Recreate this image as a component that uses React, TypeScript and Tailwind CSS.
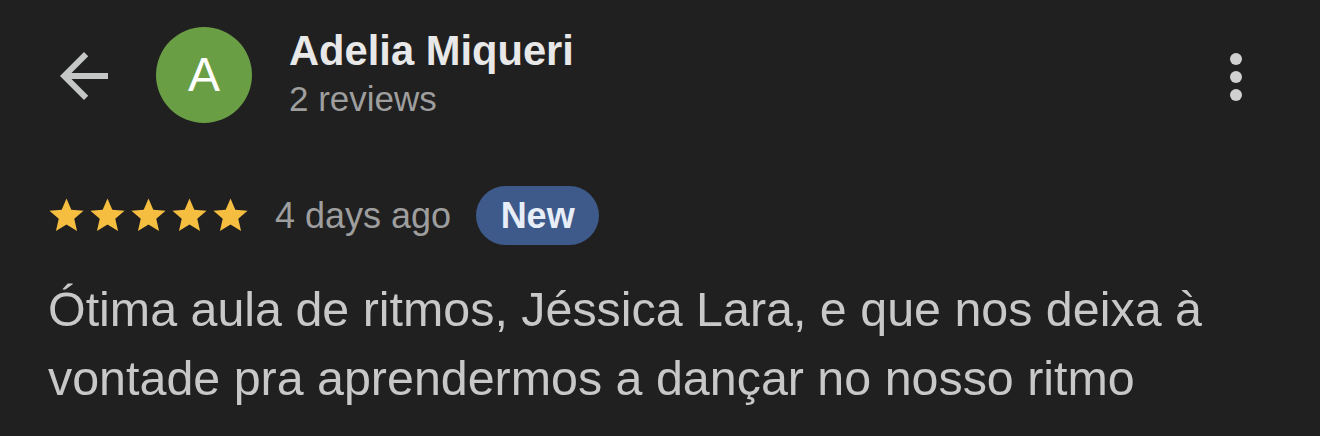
import React from "react";

const Star = () => (
  <svg width="41" height="41" viewBox="0 0 24 24" className="block">
    <path
      fill="#f5be41"
      d="M12 17.27L18.18 21l-1.64-7.03L22 9.24l-7.19-.61L12 2 9.19 8.63 2 9.24l5.46 4.73L5.82 21z"
    />
  </svg>
);

export default function App() {
  return (
    <div className="w-[1320px] h-[436px] bg-[#202020] overflow-hidden font-['Liberation_Sans',Arial,sans-serif]">
      <div className="flex items-start pt-[27px] pl-[48px] pr-[48px]">
        <svg width="72" height="72" viewBox="0 0 24 24" className="mt-[13px] shrink-0">
          <path
            fill="#c4c7c5"
            d="M20 11H7.83l5.59-5.59L12 4l-8 8 8 8 1.41-1.41L7.83 13H20v-2z"
          />
        </svg>
        <div className="ml-[36px] w-[96px] h-[96px] rounded-full bg-[#6a9e44] flex items-center justify-center shrink-0">
          <span className="text-[48px] leading-none text-white">A</span>
        </div>
        <div className="ml-[37px] flex flex-col">
          <div className="text-[41.7px] leading-[48px] font-bold text-[#e8e8e8]">Adelia Miqueri</div>
          <div className="mt-[4px] text-[35px] leading-[40px] text-[#9e9e9e]">2 reviews</div>
        </div>
        <svg width="72" height="72" viewBox="0 0 24 24" className="ml-auto mt-[14px] shrink-0">
          <circle cx="12" cy="6" r="2" fill="#d0d0d0" />
          <circle cx="12" cy="12" r="2" fill="#d0d0d0" />
          <circle cx="12" cy="18" r="2" fill="#d0d0d0" />
        </svg>
      </div>

      <div className="mt-[63px] pl-[46px] flex items-center">
        <div className="flex">
          <Star />
          <Star />
          <Star />
          <Star />
          <Star />
        </div>
        <span className="ml-[24px] text-[36px] leading-[40px] text-[#9e9e9e]">4 days ago</span>
        <div className="ml-[25px] w-[123px] h-[59px] rounded-full bg-[#3d5a8a] flex items-center justify-center">
          <span className="text-[36px] leading-none font-bold text-[#e8eef8]">New</span>
        </div>
      </div>

      <p className="mt-[30px] pl-[48px] pr-[48px] text-[48.4px] leading-[69px] text-[#c8c8c8]">
        Ótima aula de ritmos, Jéssica Lara, e que nos deixa à vontade pra aprendermos a dançar no nosso ritmo
      </p>
    </div>
  );
}
